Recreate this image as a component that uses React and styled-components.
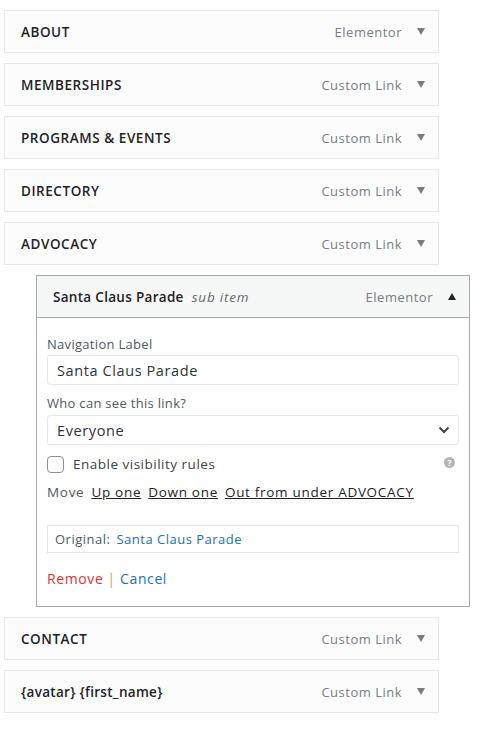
import styled, { createGlobalStyle } from "styled-components";

const GlobalStyle = createGlobalStyle`
  body {
    margin: 0;
    background: #fff;
    font-family: "Open Sans", "DejaVu Sans", sans-serif;
    color: #1d2327;
  }
`;

const Page = styled.div`
  width: 488px;
  padding: 10px 0 0 4px;
  box-sizing: border-box;
  display: flex;
  flex-direction: column;
  gap: 10px;
`;

const Item = styled.div`
  width: ${(p) => (p.$sub ? "434px" : "435px")};
  margin-left: ${(p) => (p.$sub ? "32px" : "0")};
  box-sizing: border-box;
  border: 1px solid ${(p) => (p.$open ? "#a7aaad" : "#e6e7e8")};
  background: #fff;
`;

const Head = styled.div`
  height: 41px;
  display: flex;
  align-items: center;
  padding: 0 12px 0 16px;
  background: ${(p) => (p.$open ? "#f6f7f7" : "#fcfcfc")};
  border-bottom: ${(p) => (p.$open ? "1px solid #a7aaad" : "none")};
`;

const Title = styled.span`
  flex: 1;
  font-size: 13.5px;
  font-weight: 600;
  letter-spacing: ${(p) => (p.$tight ? "0.3px" : "0.55px")};
  color: #1d2327;
`;

const SubTag = styled.em`
  font-weight: 400;
  color: #646970;
  margin-left: 8px;
  letter-spacing: 0.8px;
`;

const Kind = styled.span`
  font-size: 13px;
  color: #787c82;
  letter-spacing: 0.5px;
  margin-right: 15px;
`;

const Arrow = styled.span`
  width: 0;
  height: 0;
  border-left: 4px solid transparent;
  border-right: 4px solid transparent;
  ${(p) =>
    p.$up
      ? "border-bottom: 7px solid #1d2327;"
      : "border-top: 7px solid #787c82;"}
  margin-right: 1px;
`;

const Body = styled.div`
  padding: 17px 10px 18px 10px;
  display: flex;
  flex-direction: column;
`;

const Label = styled.div`
  font-size: 13px;
  line-height: 18px;
  letter-spacing: 0.3px;
  color: #50575e;
  margin-bottom: ${(p) => (p.$far ? "3px" : "2px")};
`;

const Field = styled.div`
  height: 30px;
  box-sizing: border-box;
  border: 1px solid #e6e7e8;
  border-radius: 3px;
  display: flex;
  align-items: center;
  padding: 0 8px 0 9px;
  font-size: 14.5px;
  letter-spacing: 0.6px;
  color: #2c3338;
  margin-bottom: 9px;
  justify-content: space-between;
`;

const CheckRow = styled.div`
  display: flex;
  align-items: center;
  font-size: 13.5px;
  letter-spacing: 0.5px;
  color: #3c434a;
  height: 20px;
`;

const Box = styled.span`
  width: 17px;
  height: 17px;
  border: 1px solid #8c8f94;
  border-radius: 4px;
  box-sizing: border-box;
  margin-right: 9px;
`;

const Help = styled.span`
  width: 11px;
  height: 11px;
  border-radius: 50%;
  background: #b4b7ba;
  color: #fff;
  font-size: 8px;
  font-weight: 700;
  letter-spacing: 0;
  display: flex;
  align-items: center;
  justify-content: center;
  margin: -3px 4px 0 auto;
`;

const MoveRow = styled.div`
  font-size: 13.5px;
  line-height: 18px;
  letter-spacing: 0.7px;
  color: #50575e;
  margin-top: 9px;
  display: flex;
  gap: 7px;
`;

const MoveLink = styled.a`
  color: #1d2327;
  text-decoration: underline;
`;

const Original = styled.div`
  margin-top: 24px;
  height: 28px;
  box-sizing: border-box;
  border: 1px solid #e6e7e8;
  display: flex;
  align-items: center;
  padding: 0 7px;
  font-size: 13px;
  letter-spacing: 0.5px;
  color: #50575e;
  gap: 6px;
`;

const Blue = styled.a`
  color: #2271b1;
  text-decoration: none;
`;

const Actions = styled.div`
  margin-top: 17px;
  font-size: 14px;
  line-height: 18px;
  letter-spacing: 0.6px;
  color: #dba617;
`;

const Red = styled.a`
  color: #d63638;
  text-decoration: none;
`;

const items = [
  ["ABOUT", "Elementor"],
  ["MEMBERSHIPS", "Custom Link"],
  ["PROGRAMS & EVENTS", "Custom Link"],
  ["DIRECTORY", "Custom Link"],
  ["ADVOCACY", "Custom Link"],
];

const MenuItem = ({ title, kind, tight }) => (
  <Item>
    <Head>
      <Title $tight={tight}>{title}</Title>
      <Kind>{kind}</Kind>
      <Arrow />
    </Head>
  </Item>
);

export default function App() {
  return (
    <>
      <GlobalStyle />
      <Page>
        {items.map(([t, k]) => (
          <MenuItem key={t} title={t} kind={k} />
        ))}
        <Item $sub $open>
          <Head $open>
            <Title $tight>
              Santa Claus Parade<SubTag>sub item</SubTag>
            </Title>
            <Kind>Elementor</Kind>
            <Arrow $up />
          </Head>
          <Body>
            <Label>Navigation Label</Label>
            <Field>Santa Claus Parade</Field>
            <Label $far>Who can see this link?</Label>
            <Field>
              Everyone
              <svg width="12" height="8" viewBox="0 0 12 8">
                <path d="M1.5 1.5 6 6l4.5-4.5" fill="none" stroke="#3c434a" strokeWidth="2" />
              </svg>
            </Field>
            <CheckRow>
              <Box />
              Enable visibility rules
              <Help>?</Help>
            </CheckRow>
            <MoveRow>
              Move
              <MoveLink>Up one</MoveLink>
              <MoveLink>Down one</MoveLink>
              <MoveLink>Out from under ADVOCACY</MoveLink>
            </MoveRow>
            <Original>
              Original: <Blue>Santa Claus Parade</Blue>
            </Original>
            <Actions>
              <Red>Remove</Red> | <Blue>Cancel</Blue>
            </Actions>
          </Body>
        </Item>
        <MenuItem title="CONTACT" kind="Custom Link" />
        <MenuItem title="{avatar} {first_name}" kind="Custom Link" tight />
      </Page>
    </>
  );
}
